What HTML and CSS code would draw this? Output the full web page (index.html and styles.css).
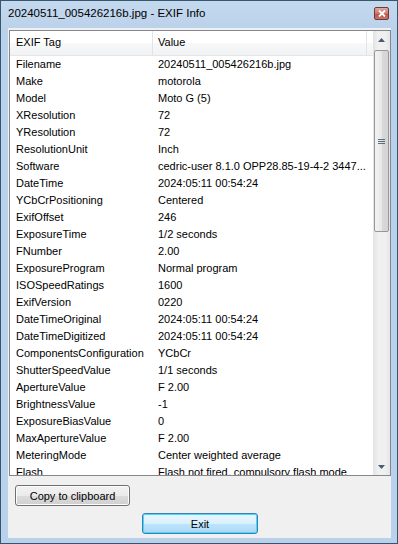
FILE: index.html
```html
<!DOCTYPE html>
<html lang="en">
<head>
    <meta charset="UTF-8">
    <meta name="viewport" content="width=device-width, initial-scale=1.0">
    <title>EXIF Info</title>
    <link rel="stylesheet" href="styles.css">
</head>
<body>
    <div class="window">
        <div class="titlebar">
            <span class="title">20240511_005426216b.jpg - EXIF Info</span>
            <span class="close-btn">
                <svg width="8" height="7" viewBox="0 0 8 7">
                    <path d="M1 0.5 L7 6.5 M7 0.5 L1 6.5" stroke="#fff" stroke-width="1.8"/>
                </svg>
            </span>
        </div>

        <div class="client">
            <div class="listview">
                <div class="list-main">
                    <div class="list-header">
                        <div class="col-tag hcell">EXIF Tag</div>
                        <div class="col-value hcell">Value</div>
                        <div class="hfill"></div>
                    </div>
                    <div class="rows">
                        <div class="row"><span class="col-tag">Filename</span><span class="col-value">20240511_005426216b.jpg</span></div>
                        <div class="row"><span class="col-tag">Make</span><span class="col-value">motorola</span></div>
                        <div class="row"><span class="col-tag">Model</span><span class="col-value">Moto G (5)</span></div>
                        <div class="row"><span class="col-tag">XResolution</span><span class="col-value">72</span></div>
                        <div class="row"><span class="col-tag">YResolution</span><span class="col-value">72</span></div>
                        <div class="row"><span class="col-tag">ResolutionUnit</span><span class="col-value">Inch</span></div>
                        <div class="row"><span class="col-tag">Software</span><span class="col-value">cedric-user 8.1.0 OPP28.85-19-4-2 3447...</span></div>
                        <div class="row"><span class="col-tag">DateTime</span><span class="col-value">2024:05:11 00:54:24</span></div>
                        <div class="row"><span class="col-tag">YCbCrPositioning</span><span class="col-value">Centered</span></div>
                        <div class="row"><span class="col-tag">ExifOffset</span><span class="col-value">246</span></div>
                        <div class="row"><span class="col-tag">ExposureTime</span><span class="col-value">1/2 seconds</span></div>
                        <div class="row"><span class="col-tag">FNumber</span><span class="col-value">2.00</span></div>
                        <div class="row"><span class="col-tag">ExposureProgram</span><span class="col-value">Normal program</span></div>
                        <div class="row"><span class="col-tag">ISOSpeedRatings</span><span class="col-value">1600</span></div>
                        <div class="row"><span class="col-tag">ExifVersion</span><span class="col-value">0220</span></div>
                        <div class="row"><span class="col-tag">DateTimeOriginal</span><span class="col-value">2024:05:11 00:54:24</span></div>
                        <div class="row"><span class="col-tag">DateTimeDigitized</span><span class="col-value">2024:05:11 00:54:24</span></div>
                        <div class="row"><span class="col-tag">ComponentsConfiguration</span><span class="col-value">YCbCr</span></div>
                        <div class="row"><span class="col-tag">ShutterSpeedValue</span><span class="col-value">1/1 seconds</span></div>
                        <div class="row"><span class="col-tag">ApertureValue</span><span class="col-value">F 2.00</span></div>
                        <div class="row"><span class="col-tag">BrightnessValue</span><span class="col-value">-1</span></div>
                        <div class="row"><span class="col-tag">ExposureBiasValue</span><span class="col-value">0</span></div>
                        <div class="row"><span class="col-tag">MaxApertureValue</span><span class="col-value">F 2.00</span></div>
                        <div class="row"><span class="col-tag">MeteringMode</span><span class="col-value">Center weighted average</span></div>
                        <div class="row"><span class="col-tag">Flash</span><span class="col-value">Flash not fired, compulsory flash mode</span></div>
                    </div>
                </div>

                <div class="scrollbar">
                    <div class="sb-btn">
                        <svg width="7" height="4" viewBox="0 0 7 4"><path d="M0 4 L3.5 0 L7 4 Z" fill="#4d5b70"/></svg>
                    </div>
                    <div class="sb-track">
                        <div class="sb-thumb">
                            <svg width="7" height="7" viewBox="0 0 7 7">
                                <path d="M0 1.5 H7 M0 3.5 H7 M0 5.5 H7" stroke="#5f6d80" stroke-width="1"/>
                            </svg>
                        </div>
                    </div>
                    <div class="sb-btn">
                        <svg width="7" height="4" viewBox="0 0 7 4"><path d="M0 0 L3.5 4 L7 0 Z" fill="#4d5b70"/></svg>
                    </div>
                </div>
            </div>

            <div class="copy-row">
                <button class="btn">Copy to clipboard</button>
            </div>
            <div class="exit-row">
                <button class="btn btn-default">Exit</button>
            </div>
        </div>
    </div>
</body>
</html>
```

FILE: styles.css
```css
body {
    margin: 0;
    padding: 0;
    font-family: "Liberation Sans", Arial, sans-serif;
    font-size: 11px;
    color: #000;
    background-color: #b9d1ea;
}

.window {
    width: 398px;
    height: 544px;
    box-sizing: border-box;
    border: 1px solid #34566f;
    background: linear-gradient(#c4d9ee, #b9d1ea 30px);
    display: flex;
    flex-direction: column;
}

.titlebar {
    height: 27px;
    display: flex;
    align-items: center;
    justify-content: space-between;
    padding: 0 8px 0 7px;
}

.title {
    font-size: 11.5px;
    padding-bottom: 3px;
}

.close-btn {
    width: 15px;
    height: 13px;
    box-sizing: border-box;
    border: 1px solid #6e3a3a;
    border-radius: 2px;
    background: linear-gradient(#e3a9a1, #cc7468 50%, #b94f43 51%, #c8766a);
    display: flex;
    align-items: center;
    justify-content: center;
    margin-bottom: 3px;
}

.client {
    flex: 1;
    margin: 0 6px 5px 7px;
    background-color: #f0f0f0;
    display: flex;
    flex-direction: column;
    padding: 2px 0 0 1px;
}

.listview {
    height: 446px;
    box-sizing: border-box;
    border: 1px solid #828790;
    background-color: #fff;
    display: flex;
}

.list-main {
    flex: 1;
    display: flex;
    flex-direction: column;
    overflow: hidden;
}

.list-header {
    height: 25px;
    flex-shrink: 0;
    display: flex;
    background: linear-gradient(#ffffff, #ffffff 50%, #f7f8fa 51%, #f1f2f4);
    border-bottom: 1px solid #e5e5e5;
    box-sizing: border-box;
}

.hcell {
    display: flex;
    align-items: center;
    border-right: 1px solid #e3e4e7;
    box-sizing: border-box;
    padding-bottom: 3px;
}

.hfill {
    flex: 1;
}

.col-tag {
    width: 143px;
    padding-left: 6px;
    box-sizing: border-box;
    flex-shrink: 0;
}

.col-value {
    width: 214px;
    padding-left: 5px;
    box-sizing: border-box;
    flex-shrink: 0;
    white-space: nowrap;
}

.rows {
    flex: 1;
    overflow: hidden;
}

.row {
    height: 17px;
    line-height: 17px;
    display: flex;
    white-space: nowrap;
}

.scrollbar {
    width: 17px;
    flex-shrink: 0;
    display: flex;
    flex-direction: column;
    background: linear-gradient(90deg, #e3e3e3, #f0f0f0 30%, #f0f0f0 70%, #e6e6e6);
}

.sb-btn {
    height: 17px;
    display: flex;
    align-items: center;
    justify-content: center;
}

.sb-track {
    flex: 1;
    padding-top: 2px;
}

.sb-thumb {
    height: 182px;
    margin: 0 1px;
    box-sizing: border-box;
    border: 1px solid #979797;
    border-radius: 2px;
    background: linear-gradient(90deg, #f3f3f3, #e8e8e8 50%, #d9d9d9 51%, #d4d4d4);
    display: flex;
    align-items: center;
    justify-content: center;
}

.copy-row {
    padding: 9px 0 0 6px;
}

.exit-row {
    padding-top: 7px;
    display: flex;
    justify-content: center;
}

.btn {
    width: 115px;
    height: 21px;
    font-family: "Liberation Sans", Arial, sans-serif;
    font-size: 11px;
    color: #000;
    border: 1px solid #707070;
    border-radius: 3px;
    background: linear-gradient(#f2f2f2, #ebebeb 50%, #dddddd 51%, #cfcfcf);
    box-shadow: inset 0 0 0 1px #fcfcfc;
    padding: 0;
}

.btn-default {
    width: 116px;
    border-color: #3c7fb1;
    background: linear-gradient(#eaf6fd, #d9f0fc 50%, #bee6fd 51%, #a7d9f5);
    box-shadow: inset 0 0 0 1px #48d8fb;
}
```
